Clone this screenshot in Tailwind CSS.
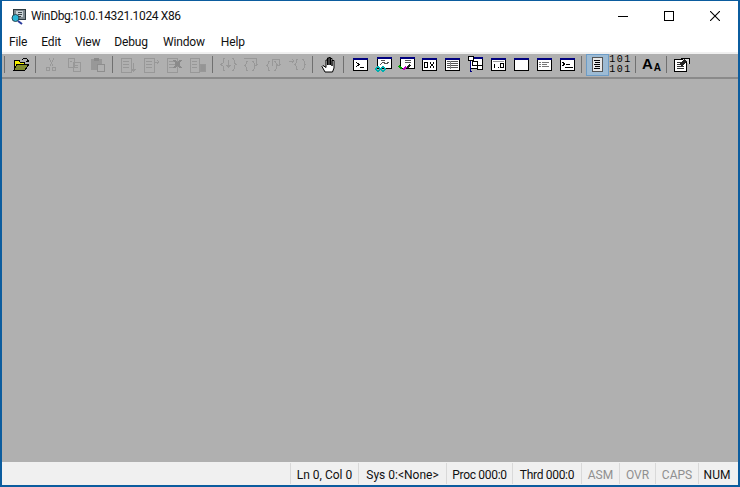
<!DOCTYPE html>
<html lang="en">
<head>
  <meta charset="UTF-8" />
  <title>WinDbg</title>
  <script src="https://cdn.jsdelivr.net/npm/@tailwindcss/browser@4"></script>
</head>
<body class="bg-white">
  <div class="w-[740px] h-[487px] flex flex-col border-2 border-t border-[#0b5c9e] overflow-hidden font-['Roboto',sans-serif] text-[12px] text-[#111]">

    <!-- title bar -->
    <div class="h-[30px] shrink-0 flex items-center bg-white pl-[8px]">
      <svg width="17" height="17" viewBox="0 0 17 17" class="mr-[4px]">
        <rect x="3.500" y="1.500" width="12" height="10" fill="#7f8a90" stroke="#2d3a40"/>
        <rect x="6" y="3" width="7" height="6" fill="#c9d2d6"/>
        <path d="M8 4.500h4M8 6.500h4M8 8.500h3" stroke="#3a4448"/>
        <circle cx="5.500" cy="10" r="3.500" fill="#29b6d8" stroke="#27454f"/>
        <path d="M8 13l4 3" stroke="#2a3b9c" stroke-width="2"/>
      </svg>
      <span class="tracking-[-0.35px]">WinDbg:10.0.14321.1024 X86</span>
      <div class="ml-auto flex h-full items-center text-black">
        <div class="w-[46px] flex justify-center"><svg width="10" height="10" viewBox="0 0 10 10"><path d="M0 5.500h10" stroke="#000"/></svg></div>
        <div class="w-[46px] flex justify-center"><svg width="10" height="10" viewBox="0 0 10 10"><rect x=".5" y=".5" width="9" height="9" fill="none" stroke="#000"/></svg></div>
        <div class="w-[46px] flex justify-center"><svg width="10" height="10" viewBox="0 0 10 10"><path d="M0 0l10 10M10 0L0 10" stroke="#000" stroke-width="1.100"/></svg></div>
      </div>
    </div>

    <!-- menu bar -->
    <div class="h-[21px] shrink-0 flex items-center bg-white pl-[7px] pt-[1px] gap-[14px] tracking-[-0.15px]">
      <span>File</span><span>Edit</span><span>View</span><span>Debug</span><span class="ml-[1px]">Window</span><span class="ml-[2px]">Help</span>
    </div>
    <div class="h-[2px] shrink-0 bg-[#f0f0f0]"></div>

    <!-- toolbar -->
    <div class="h-[25px] shrink-0 flex items-center bg-[#b0b0b0] border-b-2 border-[#8a8a8a] pl-[2px] pb-[2px]">
      <div class="w-[1px] h-[17px] bg-[#707070] mr-[5px]"></div>
      <div class="w-[23px] flex justify-center"><svg width="17" height="15" viewBox="0 0 17 15" shape-rendering="crispEdges"><path d="M1 3h5l1 2h4v8H1z" fill="#f5f000" stroke="#000"/><path d="M1 13l3-6h12l-4 6z" fill="#7f8a2c" stroke="#000"/><path d="M9 3q3-3 5-1l1 3M13 4l2 1 1-2" fill="none" stroke="#000"/></svg></div>
      <div class="w-[1px] h-[17px] bg-[#707070] ml-[2px] mr-[4px]"></div>

      <div class="w-[23px] flex justify-center"><svg width="15" height="15" viewBox="0 0 15 15" fill="none" stroke="#989898" shape-rendering="crispEdges"><path d="M5 1l4 8M10 1L6 9"/><circle cx="4" cy="12" r="2"/><circle cx="10" cy="12" r="2"/></svg></div>
      <div class="w-[23px] flex justify-center"><svg width="15" height="15" viewBox="0 0 15 15" fill="none" stroke="#989898" shape-rendering="crispEdges"><path d="M1 1h6v9H1zM6 5h7v9H6zM3 4h2M8 8h3M8 10h3"/></svg></div>
      <div class="w-[23px] flex justify-center"><svg width="15" height="15" viewBox="0 0 15 15" shape-rendering="crispEdges"><rect x="1" y="2" width="11" height="11" rx="1.500" fill="#989898"/><rect x="4" y="1" width="5" height="3" fill="#8a8a8a"/><rect x="7" y="7" width="7" height="7" fill="#b0b0b0" stroke="#8e8e8e"/></svg></div>
      <div class="w-[1px] h-[17px] bg-[#707070] ml-[3px] mr-[4px]"></div>

      <div class="w-[23px] flex justify-center"><svg width="17" height="16" viewBox="0 0 17 16" fill="none" stroke="#989898" shape-rendering="crispEdges"><path d="M1 1h10v14H1zM3 4h6M3 7h6M3 10h6M13.500 6v8M11.500 12l2 2 2-2"/></svg></div>
      <div class="w-[23px] flex justify-center"><svg width="17" height="16" viewBox="0 0 17 16" fill="none" stroke="#989898" shape-rendering="crispEdges"><path d="M1 1h10v14H1zM3 4h6M3 7h6M3 10h6M11 5h5M14 3l2 2-2 2"/></svg></div>
      <div class="w-[23px] flex justify-center"><svg width="17" height="16" viewBox="0 0 17 16" fill="none" stroke="#989898" shape-rendering="crispEdges"><path d="M1 1h10v14H1zM3 4h6M3 7h6M3 10h6"/><path d="M8 3l7 8M15 3l-7 8" stroke="#8a8a8a" stroke-width="2.500"/></svg></div>
      <div class="w-[23px] flex justify-center"><svg width="17" height="16" viewBox="0 0 17 16" fill="none" stroke="#989898" shape-rendering="crispEdges"><path d="M1 1h9v14H1zM3 4h5M3 7h5M3 10h5"/><rect x="11" y="7" width="5" height="7" fill="#959595"/></svg></div>
      <div class="w-[1px] h-[17px] bg-[#707070] ml-[3px] mr-[4px]"></div>

      <div class="w-[23px] flex justify-center"><svg width="17" height="15" viewBox="0 0 17 15" fill="none" stroke="#989898" shape-rendering="crispEdges"><path d="M5 1Q3 1 3 3v3L1 7.500 3 9v3q0 2 2 2M12 1q2 0 2 2v3l2 1.500L14 9v3q0 2-2 2M8.500 3v7M6.500 8l2 2 2-2"/></svg></div>
      <div class="w-[23px] flex justify-center"><svg width="17" height="15" viewBox="0 0 17 15" fill="none" stroke="#989898" shape-rendering="crispEdges"><path d="M1 1h9M5 4Q3 4 3 6v1L2 8.500 3 10v2q0 2 2 2M9 4q2 0 2 2v1l1 1.500L11 10v2q0 2-2 2M10 1h3v8M11 7l2 2 2-2"/></svg></div>
      <div class="w-[23px] flex justify-center"><svg width="17" height="15" viewBox="0 0 17 15" fill="none" stroke="#989898" shape-rendering="crispEdges"><path d="M4 4Q2 4 2 6v1L1 8.500 2 10v2q0 2 2 2M8 4q2 0 2 2v1l1 1.500L10 10v2q0 2-2 2M6 9V2h7v7M11 7l2 2 2-2"/></svg></div>
      <div class="w-[23px] flex justify-center"><svg width="17" height="15" viewBox="0 0 17 15" fill="none" stroke="#989898" shape-rendering="crispEdges"><path d="M9 2Q7 2 7 4v2L6 7.500 7 9v2q0 2 2 2M13 2q2 0 2 2v2l1 1.500L15 9v2q0 2-2 2M0 4h5M3 2l2 2-2 2"/></svg></div>
      <div class="w-[1px] h-[17px] bg-[#707070] ml-[3px] mr-[4px]"></div>

      <div class="w-[23px] flex justify-center"><svg width="17" height="17" viewBox="0 0 17 17"><path d="M5 16L2 10.500l1-1 3 2V4h1.500v5V2H9v7V1.500h1.500V9V2.500H12V10V4.500h2V12l-1.500 4z" fill="#fff" stroke="#000" stroke-linejoin="round"/></svg></div>
      <div class="w-[1px] h-[17px] bg-[#707070] ml-[3px] mr-[5px]"></div>

      <div class="w-[23px] flex justify-center"><svg width="15" height="13" viewBox="0 0 15 13" shape-rendering="crispEdges"><rect x=".5" y=".5" width="14" height="12" fill="#fff" stroke="#000"/><rect x="0" y="0" width="15" height="2" fill="#000080"/><path d="M3 4l3 2.500L3 9M7 9.500h4" fill="none" stroke="#000"/></svg></div>
      <div class="w-[23px] flex justify-center"><svg width="17" height="15" viewBox="0 0 17 15" shape-rendering="crispEdges"><rect x="2.500" y=".5" width="14" height="11" fill="#fff" stroke="#000"/><rect x="2" y="0" width="15" height="2" fill="#000080"/><path d="M6 3.500h4M5 8l3-3 3 2 3-2" fill="none" stroke="#555"/><circle cx="3" cy="12" r="2" fill="none" stroke="#00b0b0" stroke-width="1.300"/><circle cx="8" cy="12" r="2" fill="none" stroke="#00b0b0" stroke-width="1.300"/></svg></div>
      <div class="w-[23px] flex justify-center"><svg width="17" height="15" viewBox="0 0 17 15" shape-rendering="crispEdges"><rect x="2.500" y=".5" width="14" height="11" fill="#fff" stroke="#000"/><rect x="2" y="0" width="15" height="2" fill="#000080"/><path d="M7 3.500h6M7 5.500h6" stroke="#555"/><path d="M1 9l3 3" stroke="#00a000" stroke-width="2"/><path d="M5 13l3-3" stroke="#c000c0" stroke-width="2"/><path d="M9 11l3-3" stroke="#222" stroke-width="2"/></svg></div>
      <div class="w-[23px] flex justify-center"><svg width="15" height="13" viewBox="0 0 15 13" shape-rendering="crispEdges"><rect x=".5" y=".5" width="14" height="12" fill="#fff" stroke="#000"/><rect x="0" y="0" width="15" height="2" fill="#000080"/><path d="M2.500 4.500h3v5h-3zM8 4.500l4 5M12 4.500l-4 5" fill="none" stroke="#000"/></svg></div>
      <div class="w-[23px] flex justify-center"><svg width="15" height="13" viewBox="0 0 15 13" shape-rendering="crispEdges"><rect x=".5" y=".5" width="14" height="12" fill="#fff" stroke="#000"/><rect x="0" y="0" width="15" height="2" fill="#000080"/><path d="M2 3.500h11M2 5.500h11M2 7.500h11M2 9.500h11" stroke="#555"/><path d="M5.500 3v8" stroke="#888"/></svg></div>
      <div class="w-[23px] flex justify-center"><svg width="17" height="17" viewBox="0 0 17 17" shape-rendering="crispEdges"><rect x="3.500" y="1.500" width="12" height="11" fill="#fff" stroke="#000"/><rect x="3" y="1" width="13" height="2" fill="#000080"/><path d="M3 5v10l2 1" fill="none" stroke="#000080"/><rect x="1.500" y=".5" width="5" height="4" fill="#fff" stroke="#000"/><rect x="5.500" y="5.500" width="5" height="4" fill="#fff" stroke="#000"/><rect x="10.500" y="9.500" width="5" height="4" fill="#fff" stroke="#000"/></svg></div>
      <div class="w-[23px] flex justify-center"><svg width="15" height="13" viewBox="0 0 15 13" shape-rendering="crispEdges"><rect x=".5" y=".5" width="14" height="12" fill="#fff" stroke="#000"/><rect x="0" y="0" width="15" height="2" fill="#000080"/><path d="M2 3.500h11" stroke="#999"/><path d="M3.500 6v4M6.500 9.500h1M9.500 5.500h3v4h-3z" fill="none" stroke="#000"/></svg></div>
      <div class="w-[23px] flex justify-center"><svg width="15" height="13" viewBox="0 0 15 13" shape-rendering="crispEdges"><rect x=".5" y=".5" width="14" height="12" fill="#fff" stroke="#000"/><rect x="0" y="0" width="15" height="2" fill="#000080"/></svg></div>
      <div class="w-[23px] flex justify-center"><svg width="15" height="13" viewBox="0 0 15 13" shape-rendering="crispEdges"><rect x=".5" y=".5" width="14" height="12" fill="#fff" stroke="#000"/><rect x="0" y="0" width="15" height="2" fill="#000080"/><path d="M2 4.500h2M5 4.500h7M2 6.500h2M5 6.500h5M2 8.500h2M5 8.500h7" stroke="#777"/></svg></div>
      <div class="w-[23px] flex justify-center"><svg width="15" height="13" viewBox="0 0 15 13" shape-rendering="crispEdges"><rect x=".5" y=".5" width="14" height="12" fill="#fff" stroke="#000"/><rect x="0" y="0" width="15" height="2" fill="#000080"/><path d="M2 4l3 2-3 2M6 6.500h4M5 9.500h8" fill="none" stroke="#000"/></svg></div>
      <div class="w-[1px] h-[17px] bg-[#707070] ml-[2px] mr-[4px]"></div>

      <div class="w-[23px] h-[22px] flex justify-center items-center bg-[#9dbbd4] border border-[#6d9cc6]"><svg width="11" height="15" viewBox="0 0 11 15" shape-rendering="crispEdges"><rect x=".5" y=".5" width="10" height="14" fill="#e8e8e8" stroke="#555"/><path d="M2 3.500h6M3 5.500h5M2 7.500h6M3 9.500h5M2 11.500h6" stroke="#000"/></svg></div>
      <div class="w-[23px] flex flex-col items-center font-['Liberation_Mono',monospace] text-[10px] leading-[10px] tracking-[1.500px] text-black"><span>101</span><span>101</span></div>
      <div class="w-[1px] h-[17px] bg-[#707070] ml-[3px] mr-[4px]"></div>

      <div class="w-[23px] h-[17px] flex justify-center items-start font-['Liberation_Sans',sans-serif] font-bold text-black leading-none"><span class="text-[15px]">A</span><span class="text-[10px] mt-[7px] ml-[1px]">A</span></div>
      <div class="w-[1px] h-[17px] bg-[#707070] ml-[3px] mr-[4px]"></div>

      <div class="w-[23px] flex justify-center"><svg width="17" height="15" viewBox="0 0 17 15" shape-rendering="crispEdges"><rect x=".5" y="2.500" width="12" height="12" fill="#fff" stroke="#000"/><path d="M3 5.500h7M3 7.500h7M3 9.500h7M3 11.500h7" stroke="#333"/><path d="M7 1h8v6" fill="#ddd" stroke="#000"/><path d="M5 7l5-5 3 2-5 5z" fill="#222"/></svg></div>
    </div>

    <!-- client area -->
    <div class="flex-1 bg-[#b0b0b0]"></div>

    <!-- status bar -->
    <div class="h-[23px] shrink-0 flex items-center bg-[#f0f0f0] pl-[288px] text-[#111]">
      <div class="w-[1px] h-[21px] bg-[#d9d9d9]"></div>
      <div class="w-[67px] text-center pt-[2px]">Ln 0, Col 0</div>
      <div class="w-[1px] h-[21px] bg-[#d9d9d9]"></div>
      <div class="w-[87px] text-center pt-[2px]">Sys 0:&lt;None&gt;</div>
      <div class="w-[1px] h-[21px] bg-[#d9d9d9]"></div>
      <div class="w-[65px] text-center pt-[2px] tracking-[-0.3px]">Proc 000:0</div>
      <div class="w-[1px] h-[21px] bg-[#d9d9d9]"></div>
      <div class="w-[68px] text-center pt-[2px] tracking-[-0.3px]">Thrd 000:0</div>
      <div class="w-[1px] h-[21px] bg-[#d9d9d9]"></div>
      <div class="w-[37px] text-center pt-[2px] text-[#8f8f8f]">ASM</div>
      <div class="w-[1px] h-[21px] bg-[#d9d9d9]"></div>
      <div class="w-[35px] text-center pt-[2px] text-[#8f8f8f]">OVR</div>
      <div class="w-[1px] h-[21px] bg-[#d9d9d9]"></div>
      <div class="w-[42px] text-center pt-[2px] text-[#8f8f8f]">CAPS</div>
      <div class="w-[1px] h-[21px] bg-[#d9d9d9]"></div>
      <div class="w-[36px] text-center pt-[2px]">NUM</div>
    </div>
  </div>
</body>
</html>
